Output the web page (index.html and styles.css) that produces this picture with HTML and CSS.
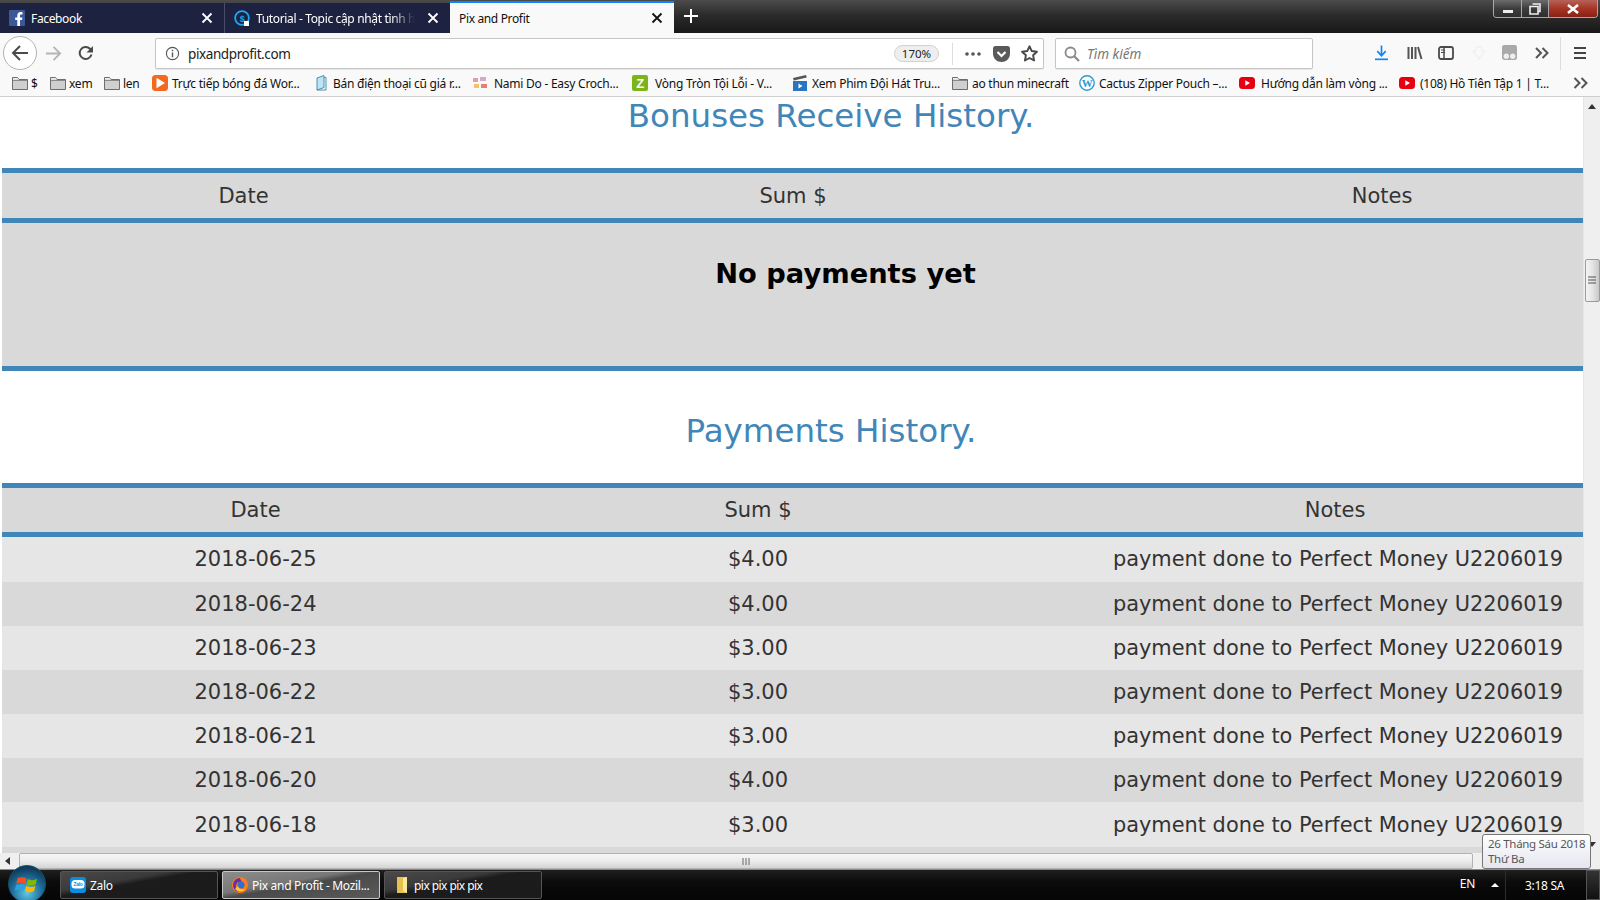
FILE: index.html
```html
<!DOCTYPE html>
<html lang="vi">
<head>
<meta charset="utf-8">
<title>Pix and Profit</title>
<link rel="stylesheet" href="styles.css">
</head>
<body>
<svg class="defs" width="0" height="0" aria-hidden="true">
  <symbol id="folder" viewBox="0 0 16 16">
    <path d="M.5 14.5V2.5h5l1.5 2h8.5v10z" fill="#cfcfcf" stroke="#6d6d6d"/>
    <path d="M1 5.5h14" stroke="#8a8a8a"/>
    <path d="M1 3h4.5l1.2 1.6H1z" fill="#eee"/>
  </symbol>
  <symbol id="yt" viewBox="0 0 16 16">
    <rect y="2" width="16" height="12" rx="3.5" fill="#e60012"/>
    <path d="M6.3 5.3v5.4L11 8z" fill="#fff"/>
  </symbol>
  <symbol id="x" viewBox="0 0 12 12">
    <path d="M1.5 1.5l9 9M10.5 1.5l-9 9" stroke="currentColor" stroke-width="1.8" fill="none"/>
  </symbol>
</svg>

<header class="tabbar">
  <div class="tab tab-dark tab-first">
    <svg class="fav" viewBox="0 0 16 16"><rect width="16" height="16" rx="1" fill="#3b5998"/><path d="M11 16V10h2l.4-2.6H11V5.8c0-.8.3-1.2 1.2-1.2h1.3V2.3C13.200 2.200 12.400 2.100 11.500 2.100 9.600 2.100 8.300 3.300 8.300 5.500v1.900H6.200V10h2.100v6z" fill="#fff"/></svg>
    <span class="tab-label">Facebook</span>
    <svg class="tab-x"><use href="#x"/></svg>
  </div>
  <div class="tab tab-dark tab-second">
    <svg class="fav" viewBox="0 0 16 16"><circle cx="8" cy="8" r="6.900" fill="none" stroke="#1ea7f5" stroke-width="1.800"/><text x="8" y="11.500" class="fav-dollar">$</text><path d="M10 11h5v5h-5z" fill="#fff"/></svg>
    <span class="tab-label tab-fade">Tutorial - Topic cập nhật tình h</span>
    <svg class="tab-x"><use href="#x"/></svg>
  </div>
  <div class="tab tab-active">
    <span class="tab-label">Pix and Profit</span>
    <svg class="tab-x"><use href="#x"/></svg>
  </div>
  <svg class="tab-new" viewBox="0 0 14 14"><path d="M7 0v14M0 7h14" stroke="#fff" stroke-width="2"/></svg>
  <div class="winctl">
    <div class="win-btn win-min"><span class="min-bar"></span></div>
    <div class="win-btn win-max"><svg viewBox="0 0 12 12" width="12" height="12"><path d="M3.500 1h7.500v7.500H9M1 3.500h8V11H1z" fill="none" stroke="#eee" stroke-width="1.600"/></svg></div>
    <div class="win-btn win-close"><svg viewBox="0 0 14 10" width="14" height="10"><path d="M2 1l10 8M12 1L2 9" stroke="#fff" stroke-width="2.600"/></svg></div>
  </div>
</header>

<nav class="toolbar">
  <button class="back" aria-label="Back"><svg viewBox="0 0 18 18" width="18" height="18"><path d="M17 9H2M9 2L2 9l7 7" fill="none" stroke="#4a4a4a" stroke-width="2"/></svg></button>
  <svg class="tool forward" viewBox="0 0 18 18"><path d="M1 9h15M9 2l7 7-7 7" fill="none" stroke="#b5b5b5" stroke-width="2"/></svg>
  <svg class="tool reload" viewBox="0 0 16 16"><path d="M13.500 9.500A6 6 0 1 1 12 3.800L14 6" fill="none" stroke="#4a4a4a" stroke-width="2"/><path d="M15 1v6.500H8.500z" fill="#4a4a4a"/></svg>
  <div class="urlbar">
    <svg class="info" viewBox="0 0 16 16"><circle cx="8" cy="8" r="6.500" fill="none" stroke="#555" stroke-width="1.200"/><path d="M8 7v5M8 4v1.600" stroke="#555" stroke-width="1.500"/></svg>
    <span class="url">pixandprofit.com</span>
    <span class="zoom-pill">170%</span>
    <span class="url-sep"></span>
    <svg class="dots" viewBox="0 0 16 4"><circle cx="2" cy="2" r="1.800" fill="#555"/><circle cx="8" cy="2" r="1.800" fill="#555"/><circle cx="14" cy="2" r="1.800" fill="#555"/></svg>
    <svg class="pocket" viewBox="0 0 17 16"><path d="M0 2.500C0 1 1 0 2.500 0h12C16 0 17 1 17 2.500V7.500c0 5-4 8.500-8.500 8.500S0 12.500 0 7.500z" fill="#5a5a5a"/><path d="M4.500 6l4 4 4-4" fill="none" stroke="#fff" stroke-width="2.200"/></svg>
    <svg class="star" viewBox="0 0 16 16"><path d="M8 1.200l2.100 4.500 4.900.6-3.600 3.400.9 4.900L8 12.200l-4.300 2.400.9-4.900L1 6.300l4.900-.6z" fill="none" stroke="#4a4a4a" stroke-width="1.800" stroke-linejoin="round"/></svg>
  </div>
  <div class="searchbar">
    <svg class="mag" viewBox="0 0 16 16"><circle cx="6.500" cy="6.500" r="5" fill="none" stroke="#8a8a8a" stroke-width="1.800"/><path d="M10 10l5 5" stroke="#8a8a8a" stroke-width="2.200"/></svg>
    <span class="search-text">Tìm kiếm</span>
  </div>
  <svg class="tool dl" viewBox="0 0 14 16"><path d="M7 0v10M2.500 6L7 11l4.500-5" fill="none" stroke="#0a84ff" stroke-width="1.800"/><path d="M0 14.800h14" stroke="#0a84ff" stroke-width="1.800"/></svg>
  <svg class="tool lib" viewBox="0 0 16 16"><path d="M1.500 2v12M5 2v12M8.500 2v12M11 2l3.500 12" fill="none" stroke="#555" stroke-width="2"/></svg>
  <svg class="tool side" viewBox="0 0 16 16"><rect x="1" y="2" width="14" height="12" rx="2" fill="none" stroke="#4a4a4a" stroke-width="1.800"/><path d="M6 2v12" stroke="#4a4a4a" stroke-width="1.500"/><path d="M8 5h4M8 7.500h4" stroke="#4a4a4a" transform="translate(-5 0)"/></svg>
  <svg class="tool ghost" viewBox="0 0 16 16"><path d="M5 2h6v4h3l-6 8-6-8h3z" fill="none" stroke="#f0f0f0" stroke-width="1.300"/></svg>
  <svg class="tool ext" viewBox="0 0 14 14"><rect width="14" height="14" rx="2" fill="#a9a9a9"/><circle cx="4" cy="10.500" r="2.500" fill="#eee"/><circle cx="10" cy="10.500" r="2.500" fill="#eee"/></svg>
  <svg class="tool more" viewBox="0 0 14 12"><path d="M1 1l5 5-5 5M7.500 1l5 5-5 5" fill="none" stroke="#555" stroke-width="2"/></svg>
  <span class="tool-sep"></span>
  <svg class="tool burger" viewBox="0 0 12 12"><path d="M0 1h12M0 6h12M0 11h12" stroke="#444" stroke-width="2"/></svg>
</nav>

<div class="bookmarks">
  <a class="bm bm1"><svg class="bm-ic"><use href="#folder"/></svg>$</a>
  <a class="bm bm2"><svg class="bm-ic"><use href="#folder"/></svg>xem</a>
  <a class="bm bm3"><svg class="bm-ic"><use href="#folder"/></svg>len</a>
  <a class="bm bm4"><svg class="bm-ic" viewBox="0 0 16 16"><rect width="16" height="16" rx="3.500" fill="#f2691f"/><path d="M4.500 2.800v10.400L13 8z" fill="#fff"/></svg>Trực tiếp bóng đá Wor...</a>
  <a class="bm bm5"><svg class="bm-ic bm-ic-thin" viewBox="0 0 12 16"><path d="M2 3l7-2.500v12L2 15z" fill="#bfe3f4" stroke="#4a8fb5"/><path d="M9 2.500h2V15H2" fill="none" stroke="#4a8fb5"/></svg>Bán điện thoại cũ giá r...</a>
  <a class="bm bm6"><svg class="bm-ic" viewBox="0 0 16 16"><rect x="1" y="3" width="5" height="4" fill="#e89aa8"/><rect x="8" y="2" width="6" height="4" fill="#d7a7c9"/><rect x="2" y="9" width="5" height="4" fill="#f0c36a"/><rect x="9" y="9" width="6" height="4" fill="#e57f6f"/></svg>Nami Do - Easy Croch...</a>
  <a class="bm bm7"><svg class="bm-ic" viewBox="0 0 16 16"><rect width="16" height="16" rx="2" fill="#7cb518"/><text x="8" y="13" class="bm-z">Z</text></svg>Vòng Tròn Tội Lỗi - V...</a>
  <a class="bm bm8"><svg class="bm-ic" viewBox="0 0 16 16"><path d="M1 3l13-3 .8 2.500-13 3z" fill="#555"/><rect x="1" y="6" width="14" height="10" fill="#2a75c0"/><path d="M6.500 8.500v5l4-2.500z" fill="#fff"/></svg>Xem Phim Đội Hát Tru...</a>
  <a class="bm bm9"><svg class="bm-ic"><use href="#folder"/></svg>ao thun minecraft</a>
  <a class="bm bm10"><svg class="bm-ic" viewBox="0 0 16 16"><circle cx="8" cy="8" r="7.200" fill="#fff" stroke="#2b9bd3" stroke-width="1.400"/><text x="8" y="12" class="bm-w">W</text></svg>Cactus Zipper Pouch –...</a>
  <a class="bm bm11"><svg class="bm-ic"><use href="#yt"/></svg>Hướng dẫn làm vòng ...</a>
  <a class="bm bm12"><svg class="bm-ic"><use href="#yt"/></svg>(108) Hồ Tiên Tập 1 | T...</a>
  <svg class="bm-more" viewBox="0 0 16 12"><path d="M1.500 1l5 5-5 5M8.500 1l5 5-5 5" fill="none" stroke="#555" stroke-width="2"/></svg>
</div>

<div class="window">
  <main class="page">
    <h2 class="heading">Bonuses Receive History.</h2>
    <table class="history history-a">
      <colgroup><col class="a1"><col class="a2"><col class="a3"></colgroup>
      <thead><tr><th class="first">Date</th><th>Sum $</th><th>Notes</th></tr></thead>
      <tbody><tr><td colspan="3" class="empty">No payments yet</td></tr></tbody>
    </table>
    <h2 class="heading heading-next">Payments History.</h2>
    <table class="history history-b">
      <colgroup><col class="b1"><col class="b2"><col class="b3"></colgroup>
      <thead><tr><th class="first">Date</th><th>Sum $</th><th>Notes</th></tr></thead>
      <tbody>
        <tr><td class="first">2018-06-25</td><td>$4.00</td><td>payment done to Perfect Money U2206019</td></tr>
        <tr><td class="first">2018-06-24</td><td>$4.00</td><td>payment done to Perfect Money U2206019</td></tr>
        <tr><td class="first">2018-06-23</td><td>$3.00</td><td>payment done to Perfect Money U2206019</td></tr>
        <tr><td class="first">2018-06-22</td><td>$3.00</td><td>payment done to Perfect Money U2206019</td></tr>
        <tr><td class="first">2018-06-21</td><td>$3.00</td><td>payment done to Perfect Money U2206019</td></tr>
        <tr><td class="first">2018-06-20</td><td>$4.00</td><td>payment done to Perfect Money U2206019</td></tr>
        <tr><td class="first">2018-06-18</td><td>$3.00</td><td>payment done to Perfect Money U2206019</td></tr>
        <tr><td class="first">&nbsp;</td><td></td><td></td></tr>
      </tbody>
    </table>
  </main>
  <aside class="vscroll">
    <svg class="arrow-up" viewBox="0 0 8 5"><path d="M0 5l4-5 4 5z" fill="#333"/></svg>
    <div class="vthumb"><svg viewBox="0 0 8 9" width="8" height="9"><path d="M0 1h8M0 4h8M0 7h8" stroke="#555" stroke-width="1"/></svg></div>
    <svg class="arrow-down" viewBox="0 0 8 5"><path d="M0 0l4 5 4-5z" fill="#333"/></svg>
  </aside>
</div>

<div class="hscroll">
  <svg class="arrow-left" viewBox="0 0 5 8"><path d="M5 0L0 4l5 4z" fill="#333"/></svg>
  <div class="hthumb"><svg viewBox="0 0 8 7" width="8" height="7"><path d="M1 0v7M4 0v7M7 0v7" stroke="#666"/></svg></div>
</div>

<footer class="taskbar">
  <div class="orb"><svg viewBox="0 0 20 20" width="25" height="25"><path d="M2 5c2.500-1.200 5-1.200 7.200.2L8.200 9.600C6 8.300 3.500 8.300 1 9.400z" fill="#f25022"/><path d="M10.300 5.600c2.300 1.300 4.700 1.200 7.300 0l-1.100 4.400c-2.500 1.100-5 1.200-7.200-.1z" fill="#7fba00"/><path d="M.9 10.400c2.500-1.100 5-1.100 7.100.2l-1 4.300c-2.200-1.300-4.600-1.300-7.200-.1z" fill="#29a3e0"/><path d="M9 11c2.300 1.300 4.700 1.200 7.200.1l-1 4.300c-2.500 1.200-5 1.200-7.200 0z" fill="#fdb900"/></svg></div>
  <div class="task">
    <svg class="task-ic" viewBox="0 0 16 16"><rect width="16" height="16" rx="3" fill="#0a8de0"/><rect x="1.500" y="3" width="13" height="8.500" rx="3.500" fill="#fff"/><text x="8" y="9.300" class="zalo-text">Zalo</text></svg>
    <span>Zalo</span>
  </div>
  <div class="task task-on">
    <svg class="task-ic" viewBox="0 0 16 16"><circle cx="8" cy="8" r="8" fill="#ff7a18"/><path d="M8 1a7 7 0 0 0-7 7c0 3 2 6 5 7C3.500 12 3 9 5 6c1-1.500 4-1 5 0-1-3-2-4-2-5z" fill="#6a2fa5"/><circle cx="9" cy="8" r="3.500" fill="#2c6fd6"/><path d="M3 12c3 3 8 3 11 0-3 1-7 1-8-3z" fill="#ffcb2b"/></svg>
    <span>Pix and Profit - Mozil...</span>
  </div>
  <div class="task task-folder">
    <svg class="task-ic" viewBox="0 0 16 16"><path d="M3 0h10v16H3z" fill="#e8c04c"/><path d="M9 1l4-1v16l-4-2z" fill="#f7e9a0"/></svg>
    <span>pix pix pix pix</span>
  </div>
  <div class="tray">
    <span class="lang">EN</span>
    <svg class="tray-up" viewBox="0 0 8 4"><path d="M0 4l4-4 4 4z" fill="#fff"/></svg>
    <span class="tray-sep"></span>
    <span class="clock">3:18 SA</span>
    <span class="desktop"></span>
  </div>
</footer>

<div class="date-tip">26 Tháng Sáu 2018<br>Thứ Ba</div>
</body>
</html>
```

FILE: styles.css
```css
* { box-sizing: border-box; }
html, body { margin: 0; height: 100%; }
body {
  width: 1600px;
  height: 900px;
  overflow: hidden;
  display: flex;
  flex-direction: column;
  position: relative;
  background: #fff;
  font-family: "Noto Sans", "Open Sans", sans-serif;
}
.defs { position: absolute; }

/* tab strip */
.tabbar {
  height: 33px;
  flex: none;
  display: flex;
  align-items: stretch;
  padding-top: 3px;
  background: linear-gradient(180deg, #4b4b4b 0%, #2c2c2c 45%, #171717 100%);
  position: relative;
}
.tab {
  width: 225px;
  display: flex;
  align-items: center;
  font-size: 12px;
  letter-spacing: -.35px;
  color: #fff;
  padding-left: 9px;
  position: relative;
}
.tab-dark { background: #1d2240; }
.tab-first { border-right: 1px solid #4a4e68; }
.tab-second { width: 225px; }
.tab-active {
  width: 224px;
  background: #f9f9f9;
  color: #111;
  box-shadow: 0 -2px 0 #0a84ff;
}
.fav { width: 16px; height: 16px; margin-right: 6px; flex: none; }
.fav-dollar { font: bold 9px "Liberation Sans", sans-serif; fill: #1ea7f5; text-anchor: middle; }
.tab-label { white-space: nowrap; }
.tab-fade {
  -webkit-mask-image: linear-gradient(90deg, #000 85%, transparent);
  mask-image: linear-gradient(90deg, #000 85%, transparent);
}
.tab-x {
  width: 12px;
  height: 12px;
  position: absolute;
  right: 11px;
  top: 9px;
  color: inherit;
}
.tab-new { width: 14px; height: 14px; margin: 6px 0 0 10px; }
.winctl {
  position: absolute;
  top: 0;
  right: 2px;
  width: 105px;
  height: 18px;
  display: flex;
  border: 1px solid #a8a8a8;
  border-top: 0;
  border-radius: 0 0 4px 4px;
  overflow: hidden;
}
.win-btn {
  display: flex;
  align-items: center;
  justify-content: center;
  width: 27px;
  background: linear-gradient(180deg, #6c6c6c, #3d3d3d 50%, #2e2e2e);
  border-right: 1px solid #a8a8a8;
}
.win-min { width: 28px; }
.win-close {
  flex: 1;
  border-right: 0;
  background: linear-gradient(180deg, #b5635a, #a73524 50%, #8a2015);
}
.min-bar { width: 10px; height: 3px; background: #eee; margin-top: 5px; }

/* nav toolbar */
.toolbar {
  height: 37px;
  flex: none;
  display: flex;
  align-items: flex-start;
  background: #f9f9f9;
  padding: 3px 0 0 3px;
}
.back {
  width: 34px;
  height: 34px;
  padding: 0;
  border: 1px solid #b3b3b3;
  border-radius: 50%;
  background: #fff;
  display: flex;
  align-items: center;
  justify-content: center;
}
.tool { flex: none; }
.forward { width: 17px; height: 17px; margin: 9px 0 0 8px; }
.reload { width: 16px; height: 16px; margin: 9px 0 0 16px; }
.urlbar {
  width: 889px;
  height: 31px;
  margin: 2px 0 0 61px;
  flex: none;
  display: flex;
  align-items: center;
  background: #fff;
  border: 1px solid #c6c6c6;
  border-radius: 2px;
  box-shadow: 0 1px 1px rgba(0,0,0,.08);
  padding-left: 9px;
}
.info { width: 15px; height: 15px; }
.url { font-size: 13.500px; letter-spacing: -.4px; color: #222; margin-left: 8px; }
.zoom-pill {
  margin-left: auto;
  width: 45px;
  height: 17px;
  border: 1px solid #d2d2d2;
  border-radius: 9px;
  background: #eee;
  font-size: 11.500px;
  line-height: 15px;
  text-align: center;
  color: #222;
}
.url-sep { width: 1px; height: 22px; background: #ddd; margin-left: 13px; }
.dots { width: 16px; height: 4px; margin-left: 12px; }
.pocket { width: 17px; height: 16px; margin-left: 12px; }
.star { width: 17px; height: 17px; margin: 0 5px 0 11px; }
.searchbar {
  width: 258px;
  height: 31px;
  margin: 2px 0 0 11px;
  flex: none;
  display: flex;
  align-items: center;
  background: #fff;
  border: 1px solid #c6c6c6;
  border-radius: 2px;
  box-shadow: 0 1px 1px rgba(0,0,0,.08);
  padding-left: 8px;
}
.mag { width: 16px; height: 16px; }
.search-text { font-size: 13.500px; font-style: italic; color: #777; margin-left: 7px; }
.dl { width: 13px; height: 16px; margin: 9px 0 0 62px; }
.lib { width: 16px; height: 16px; margin: 9px 0 0 19px; }
.side { width: 16px; height: 16px; margin: 9px 0 0 15px; }
.ghost { width: 18px; height: 16px; margin: 9px 0 0 16px; }
.ext { width: 15px; height: 15px; margin: 9px 0 0 14px; }
.more { width: 14px; height: 12px; margin: 11px 0 0 18px; }
.tool-sep { width: 1px; height: 34px; background: #ddd; margin: 1px 0 0 11px; }
.burger { width: 12px; height: 12px; margin: 11px 0 0 13px; }

/* bookmarks */
.bookmarks {
  height: 27px;
  flex: none;
  display: flex;
  align-items: center;
  background: #f9f9f9;
  border-bottom: 1px solid #cfcfcf;
  padding-left: 12px;
  font-size: 12px;
  letter-spacing: -.25px;
  color: #111;
  white-space: nowrap;
}
.bm { display: flex; align-items: center; flex: none; }
.bm-ic { width: 16px; height: 16px; margin-right: 4px; flex: none; }
.bm1 .bm-ic, .bm2 .bm-ic, .bm3 .bm-ic { margin-right: 3px; }
.bm-ic-thin { width: 12px; margin-right: 6px; }
.bm-z { font: bold 13px "Liberation Sans", sans-serif; fill: #fff; text-anchor: middle; }
.bm-w { font: bold 11px "Liberation Serif", serif; fill: #2b9bd3; text-anchor: middle; }
.bm1 { width: 38px; }
.bm2 { width: 54px; }
.bm3 { width: 48px; }
.bm4 { width: 163px; }
.bm5 { width: 157px; }
.bm6 { width: 160px; }
.bm6 .bm-ic { margin-right: 6px; }
.bm7 { width: 160px; }
.bm7 .bm-ic { margin-right: 7px; }
.bm8 { width: 160px; }
.bm9 { width: 127px; }
.bm10 { width: 160px; }
.bm11 { width: 160px; }
.bm11 .bm-ic { margin-right: 6px; }
.bm12 { width: 174px; }
.bm12 .bm-ic { margin-right: 5px; }
.bm-more { width: 16px; height: 12px; flex: none; }

/* page */
.window { flex: 1; min-height: 0; display: flex; }
.page {
  flex: 1;
  min-width: 0;
  overflow: hidden;
  padding-left: 2px;
  background: #fff;
}
.heading {
  margin: 0 0 35px;
  height: 36px;
  line-height: 38px;
  font-family: "DejaVu Sans", Verdana, sans-serif;
  font-weight: 400;
  font-size: 32.500px;
  color: #4186b8;
  text-align: center;
  padding-left: 77px;
}
.heading-next { height: 77px; padding-top: 41px; }
.history {
  width: 100%;
  table-layout: fixed;
  border-collapse: collapse;
  font-family: "DejaVu Sans", Verdana, sans-serif;
  font-size: 21px;
  color: #333;
  text-align: center;
}
.a1 { width: 403px; }
.a2 { width: 776px; }
.b1 { width: 427px; }
.b2 { width: 658px; }
.history thead tr {
  background: #d9d9d9;
  border-top: 5px solid #4186b8;
  border-bottom: 5px solid #4186b8;
}
.history th { font-weight: 400; height: 50px; padding: 0; }
.history-b th { height: 49px; }
.history .first { padding-left: 80px; }
.history td { padding: 0; height: 44.200px; }
.history-b tbody tr:first-child td { height: 47px; }
.history-b td:last-child { font-size: 20.900px; padding-left: 6px; }
.history-b tbody tr:nth-child(odd) { background: #e6e6e6; }
.history-b tbody tr:nth-child(even) { background: #d9d9d9; }
.history-a tbody tr { background: #d9d9d9; border-bottom: 5px solid #4186b8; }
.history-a .empty {
  height: 148px;
  padding: 35px 0 0 106px;
  vertical-align: top;
  font-size: 27.300px;
  font-weight: 700;
  color: #000;
}

/* scrollbars */
.vscroll {
  width: 17px;
  flex: none;
  display: flex;
  flex-direction: column;
  align-items: center;
  background: #efefef;
  border-left: 1px solid #e6e6e6;
}
.arrow-up { width: 8px; height: 5px; margin-top: 7px; }
.vthumb {
  width: 15px;
  height: 43px;
  margin-top: 150px;
  display: flex;
  align-items: center;
  justify-content: center;
  border: 1px solid #9a9a9a;
  border-radius: 2px;
  background: linear-gradient(90deg, #f4f4f4, #e4e4e4 50%, #c8c8c8);
}
.arrow-down { width: 8px; height: 5px; margin-top: auto; margin-bottom: 6px; }
.hscroll {
  height: 16px;
  flex: none;
  display: flex;
  align-items: center;
  background: #efefef;
  padding-left: 5px;
}
.arrow-left { width: 5px; height: 8px; flex: none; }
.hthumb {
  width: 1454px;
  height: 16px;
  margin-left: 9px;
  display: flex;
  align-items: center;
  justify-content: center;
  border: 1px solid #b2b2b2;
  border-radius: 2px;
  background: linear-gradient(180deg, #f6f6f6, #ececec 50%, #d4d4d4);
}

/* taskbar */
.taskbar {
  height: 31px;
  flex: none;
  display: flex;
  align-items: center;
  gap: 4px;
  padding-left: 60px;
  background: linear-gradient(180deg, #1f1f1f 0, #0b0b0b 40%, #050505 100%);
  border-top: 1px solid #8a8a8a;
  color: #fff;
  font-size: 12px;
  letter-spacing: -.3px;
  position: relative;
}
.orb {
  position: absolute;
  left: 8px;
  top: -5px;
  width: 38px;
  height: 38px;
  border-radius: 50%;
  display: flex;
  align-items: center;
  justify-content: center;
  border: 1px solid #16506e;
  background: radial-gradient(circle at 50% 75%, #5fc7e8 0, #1f6f9c 45%, #0f3f5f 75%, #0a2a40 100%);
}
.task {
  width: 158px;
  height: 28px;
  display: flex;
  align-items: center;
  padding-left: 9px;
  border: 1px solid #555;
  border-radius: 2px;
  background: linear-gradient(170deg, #4a4a4a 0, #3a3a3a 35%, #1c1c1c 45%, #1b1b1b 100%);
}
.task-on {
  border-color: #c8c8c8;
  background: linear-gradient(170deg, #8d8d8d 0, #777 40%, #4a4a4a 50%, #5a5a5a 100%);
}
.task-folder { letter-spacing: -.55px; }
.task-ic { width: 16px; height: 16px; margin-right: 4px; flex: none; }
.zalo-text { font: bold 5px "Liberation Sans", sans-serif; fill: #0a8de0; text-anchor: middle; }
.tray { margin-left: auto; display: flex; align-items: center; height: 100%; }
.lang { margin-top: -3px; }
.tray-up { width: 8px; height: 4px; margin-left: 16px; }
.tray-sep { width: 1px; height: 100%; background: #2d2d2d; margin-left: 6px; }
.clock { margin-left: 19px; width: 61px; }
.desktop {
  width: 14px;
  height: 100%;
  border: 1px solid #555;
  background: linear-gradient(180deg, #333, #111);
}

/* tooltip over the taskbar */
.date-tip {
  position: absolute;
  left: 1482px;
  top: 834px;
  width: 109px;
  height: 35px;
  padding: 1px 0 0 5px;
  border: 1px solid #767676;
  border-radius: 3px;
  background: linear-gradient(180deg, #fff, #e4e5f0);
  color: #575757;
  font-size: 11.500px;
  letter-spacing: -.3px;
  line-height: 15px;
  white-space: nowrap;
}
```
